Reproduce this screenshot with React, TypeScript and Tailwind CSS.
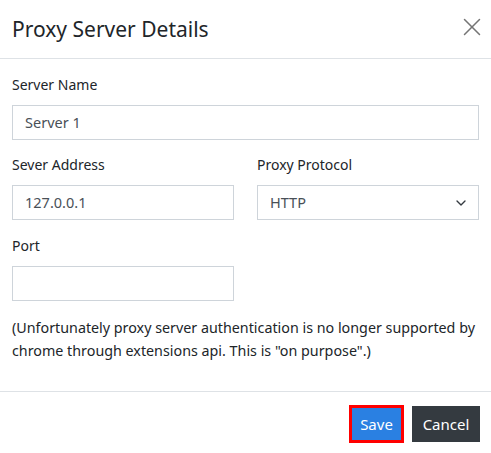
import { ChevronDown, X } from 'lucide-react'

function Field({ label, children }: { label: string; children: React.ReactNode }) {
  return (
    <div className="flex flex-col">
      <label className="h-[22px] leading-[22px] mb-[9px] text-[14px] text-[#212529]">{label}</label>
      {children}
    </div>
  )
}

function TextInput({ value }: { value: string }) {
  return (
    <div className="h-[35px] border border-[#ced4da] px-3 flex items-center text-[14.5px] text-[#495057]">
      {value}
    </div>
  )
}

export default function App() {
  return (
    <div className="w-[491px] h-[453px] bg-white text-[#212529]" style={{ fontFamily: '"Noto Sans", "Open Sans", sans-serif' }}>
      <div className="h-[59px] flex justify-between pl-3 pr-[4px] border-b border-[#dee2e6]">
        <h1 className="mt-[14px] text-[21px] leading-[30px] font-normal">Proxy Server Details</h1>
        <X className="mt-[12px] w-[30px] h-[30px] text-[#757575]" strokeWidth={1.2} />
      </div>

      <div className="px-3 pt-[15px] pb-[29px] flex flex-col">
        <div className="mb-[14px]">
          <Field label="Server Name">
            <TextInput value="Server 1" />
          </Field>
        </div>
        <div className="grid grid-cols-2 gap-x-[23px] mb-[15px]">
          <Field label="Sever Address">
            <TextInput value="127.0.0.1" />
          </Field>
          <Field label="Proxy Protocol">
            <div className="h-[35px] border border-[#ced4da] pl-3 pr-[9px] flex items-center justify-between text-[14.5px] text-[#495057]">
              <span>HTTP</span>
              <ChevronDown className="w-4 h-4 text-[#343a40]" strokeWidth={2} />
            </div>
          </Field>
        </div>
        <div className="grid grid-cols-2 gap-x-[23px] mb-[15px]">
          <Field label="Port">
            <TextInput value="" />
          </Field>
        </div>
        <p className="text-[14.3px] leading-[23px] text-[#212529]">
          (Unfortunately proxy server authentication is no longer supported by chrome through extensions api. This is "on purpose".)
        </p>
      </div>

      <div className="border-t border-[#dee2e6] flex justify-end gap-2 pt-[13px] pr-[11px]">
        <button className="h-[38px] w-[55px] border-[3px] border-[#ff0000] bg-[#2a80e2] text-white text-[15px]">Save</button>
        <button className="h-[36px] mt-[1px] w-[68px] bg-[#343a40] text-white text-[15px]">Cancel</button>
      </div>
    </div>
  )
}
